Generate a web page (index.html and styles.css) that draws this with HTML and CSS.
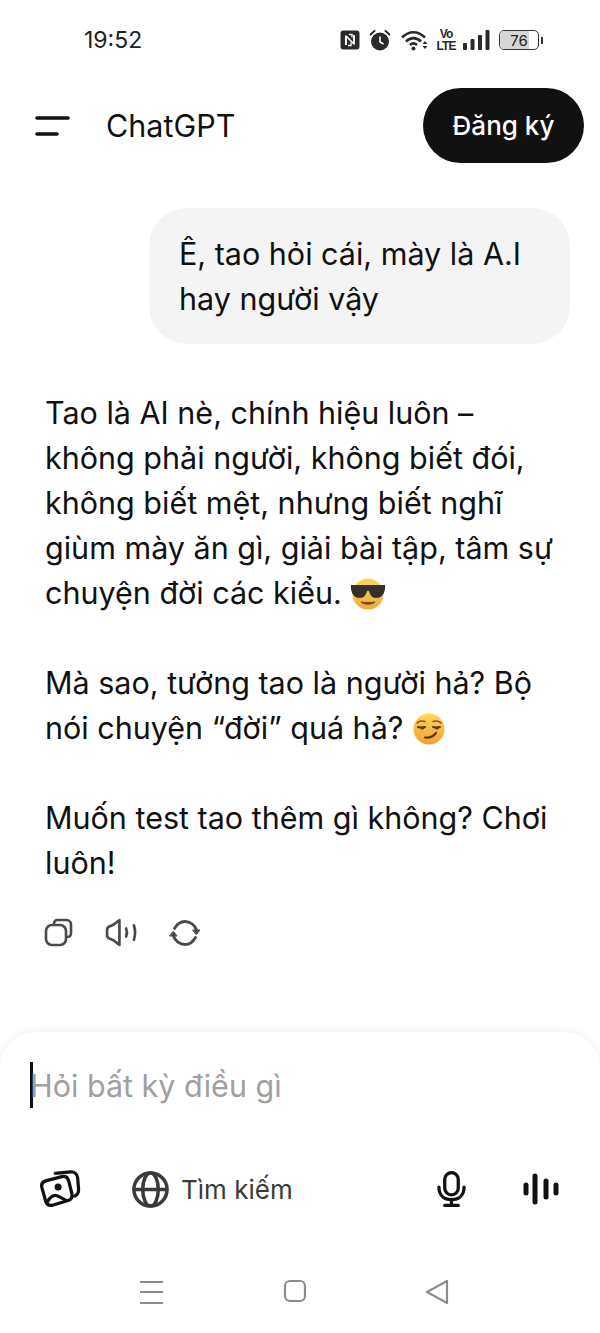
FILE: index.html
```html
<!DOCTYPE html>
<html lang="vi">
<head>
  <meta charset="UTF-8">
  <meta name="viewport" content="width=device-width, initial-scale=1.0">
  <title>ChatGPT</title>
  <link rel="stylesheet" href="styles.css">
</head>
<body>
  <!-- Status bar -->
  <div class="status-bar">
    <span class="clock">19:52</span>
    <div class="status-icons">
      <svg width="20" height="20" viewBox="0 0 20 20"><rect x="0.5" y="0.5" width="19" height="19" rx="3" fill="#2a2a2a"/><path d="M5 15V5.5h1.6L13 12V5h2v9.5h-1.6L7 8v7z" fill="#fff"/><path d="M9 4.5h3v3M8 15.5h3v-3" stroke="#fff" stroke-width="1.3" fill="none"/></svg>
      <svg width="22" height="24" viewBox="0 0 22 24"><circle cx="11" cy="13.5" r="9" fill="#2a2a2a"/><path d="M11 8.5v5.5l3.5 2" stroke="#fff" stroke-width="1.6" fill="none"/><path d="M1.5 6.5l4-3.5M20.5 6.5l-4-3.5" stroke="#2a2a2a" stroke-width="2" stroke-linecap="round"/></svg>
      <svg width="29" height="22" viewBox="0 0 28 22"><path d="M1.5 8.5c7-7 16-7 23 0M5.5 12.5c4.5-4.5 10.5-4.5 15 0M9.5 16c2.2-2 4.8-2 7 0" stroke="#2a2a2a" stroke-width="2.6" fill="none"/><circle cx="13" cy="19.5" r="2" fill="#2a2a2a"/><path d="M22 15h5l-2.5-3zM22 17h5l-2.5 3z" fill="#2a2a2a"/></svg>
      <div class="volte"><span>Vo</span><span>LTE</span></div>
      <svg width="27" height="20" viewBox="0 0 27 20"><rect x="0" y="13" width="4" height="7" rx="1" fill="#2a2a2a"/><rect x="7.5" y="9" width="4" height="11" rx="1" fill="#2a2a2a"/><rect x="15" y="5" width="4" height="15" rx="1" fill="#2a2a2a"/><rect x="22.5" y="0" width="4" height="20" rx="1" fill="#2a2a2a"/></svg>
      <div class="battery"><div class="battery-body"><div class="battery-fill" style="width: 76%"></div><span>76</span></div><div class="battery-cap"></div></div>
    </div>
  </div>

  <!-- Header -->
  <header class="top-bar">
    <svg class="menu-icon" width="36" height="24" viewBox="0 0 36 24"><path d="M2 4h31M2 20h20" stroke="#111" stroke-width="3.6" stroke-linecap="round"/></svg>
    <div class="title">ChatGPT</div>
    <button class="signup">Đăng ký</button>
  </header>

  <!-- Chat -->
  <main class="chat">
    <div class="bubble">Ê, tao hỏi cái, mày là A.I hay người vậy</div>
    <div class="reply">
      <p>Tao là AI nè, chính hiệu luôn – không phải người, không biết đói, không biết mệt, nhưng biết nghĩ giùm mày ăn gì, giải bài tập, tâm sự chuyện đời các kiểu.
        <svg class="emoji" width="36" height="32" viewBox="0 0 36 32"><defs><linearGradient id="face1" x1="0" y1="0" x2="0" y2="1"><stop offset="0" stop-color="#fcd75a"/><stop offset="1" stop-color="#f3a83a"/></linearGradient></defs><circle cx="18" cy="16" r="15.5" fill="url(#face1)"/><path d="M1 7h34v4c-1 6-4 9-9 9-4 0-6-3-7-7h-2c-1 4-3 7-7 7-5 0-8-3-9-9z" fill="#35302b"/><path d="M11 24c4 3 10 3 14 0-4 .8-10 .8-14 0z" fill="#7a4a1e" stroke="#7a4a1e"/></svg></p>
      <p>Mà sao, tưởng tao là người hả? Bộ nói chuyện “đời” quá hả?
        <svg class="emoji" width="34" height="32" viewBox="0 0 34 32"><defs><linearGradient id="face2" x1="0" y1="0" x2="0" y2="1"><stop offset="0" stop-color="#fcd75a"/><stop offset="1" stop-color="#f3a02f"/></linearGradient></defs><circle cx="17" cy="16" r="15.5" fill="url(#face2)"/><path d="M5 10c2-2 5-2.5 8-1.500M21 8.500c3-1 6-.5 8 1.500" stroke="#8a5420" stroke-width="1.5" fill="none" stroke-linecap="round"/><path d="M6 14c2 .6 5 .6 7 0M21 14c2 .6 5 .6 7 0" stroke="#5b3a1c" stroke-width="2" fill="none" stroke-linecap="round"/><ellipse cx="10.5" cy="15" rx="1.8" ry="1.5" fill="#5b3a1c"/><ellipse cx="25" cy="15" rx="1.8" ry="1.5" fill="#5b3a1c"/><path d="M13 24.500c4 .5 8-.5 11-4.500" stroke="#5b3a1c" stroke-width="2.2" fill="none" stroke-linecap="round"/></svg></p>
      <p>Muốn test tao thêm gì không? Chơi luôn!</p>
    </div>
    <div class="actions">
      <svg width="30" height="30" viewBox="0 0 30 30" fill="none" stroke="#4a4a4a" stroke-width="2.6" stroke-linejoin="round"><path d="M10 7V5.500A3.500 3.500 0 0 1 13.500 2h9A4.500 4.500 0 0 1 27 6.500v9a3.500 3.500 0 0 1-3.500 3.500H22"/><rect x="2" y="7" width="20" height="20" rx="6"/></svg>
      <svg width="33" height="31" viewBox="0 0 32 30" fill="none" stroke="#4a4a4a" stroke-width="2.6" stroke-linecap="round" stroke-linejoin="round"><path d="M14 3v24c-2-1-4-4-8-5.500-2-.7-4-1-4-3.500v-6c0-2.500 2-2.800 4-3.500C10 7 12 4 14 3z"/><path d="M20.500 11c1 2.500 1 5.500 0 8M28 8c1.500 4.500 1.500 9.500 0 14"/></svg>
      <svg width="32" height="28" viewBox="0 0 32 28" fill="none" stroke="#4a4a4a" stroke-width="2.8" stroke-linecap="round" stroke-linejoin="round"><path d="M5.500 9.500C8 5 12 2.500 16 2.500c5 0 10 3.500 11.500 8.500"/><path d="M26.500 18.500C24 23 20 25.500 16 25.500c-5 0-10-3.500-11.500-8.500"/><path d="M24 11h7l-3.500 4.500zM1 17h7l-3.500-4.500z" fill="#4a4a4a" stroke-width="1"/></svg>
    </div>
  </main>

  <!-- Composer -->
  <section class="composer">
    <div class="prompt"><span class="caret"></span><span>Hỏi bất kỳ điều gì</span></div>
    <div class="tools">
      <svg class="tool-img" width="42" height="40" viewBox="0 0 44 42" fill="none" stroke="#111" stroke-width="3.4" stroke-linecap="round" stroke-linejoin="round"><path d="M17 4.500l16-1.500c4-.3 7 2 7.500 6l1 12c.3 3.500-1 6-4 7.500"/><path d="M7 12.500l17-4.500c3.500-.9 6 .8 7 4l3.500 14c.9 3.500-.8 6-4 7l-16.500 5c-3.500.9-6-.8-7-4L3 19.500c-.9-3.500.8-6 4-7z"/><path d="M9 34c3-5 7-7 10-6 3 1 7 4 10 5"/><circle cx="20" cy="19" r="2" fill="#111"/></svg>
      <div class="search">
        <svg width="39" height="39" viewBox="0 0 40 40" fill="none" stroke="#3a3a3a" stroke-width="3.6"><circle cx="20" cy="20" r="17"/><ellipse cx="20" cy="20" rx="8" ry="17"/><path d="M3 20h34"/></svg>
        <span>Tìm kiếm</span>
      </div>
      <svg class="tool-mic" width="29" height="38" viewBox="0 0 30 38" fill="none" stroke="#111" stroke-width="3.4" stroke-linecap="round"><rect x="8" y="2" width="14" height="23" rx="7"/><path d="M2 17c0 8 5 13 13 13s13-5 13-13M15 30v6M8 36h14"/></svg>
      <svg class="tool-wave" width="36" height="32" viewBox="0 0 36 32" fill="none" stroke="#111" stroke-linecap="round"><path d="M3 12v8M33 12v8" stroke-width="5"/><path d="M12 3v26" stroke-width="5"/><path d="M23 8v16" stroke-width="5"/></svg>
    </div>
    <!-- Android nav bar -->
    <nav class="nav-bar">
      <svg width="26" height="26" viewBox="0 0 26 26" stroke="#8c8c8c" stroke-width="2.2"><path d="M1 3h23M1 13h23M1 24h23"/></svg>
      <svg width="24" height="24" viewBox="0 0 24 24" fill="none" stroke="#8c8c8c" stroke-width="2.2"><rect x="2" y="2" width="20" height="20" rx="5"/></svg>
      <svg width="24" height="26" viewBox="0 0 24 26" fill="none" stroke="#8c8c8c" stroke-width="2.2" stroke-linejoin="round"><path d="M22 2v22L2 13z"/></svg>
    </nav>
  </section>
</body>
</html>
```

FILE: styles.css
```css
* {
  margin: 0;
  padding: 0;
  box-sizing: border-box;
}

body {
  width: 600px;
  height: 1333px;
  display: flex;
  flex-direction: column;
  background: #fff;
  color: #111;
  font-family: Inter, "Noto Sans", sans-serif;
  overflow: hidden;
}

svg {
  display: block;
  flex-shrink: 0;
}

.status-bar {
  height: 80px;
  display: flex;
  align-items: center;
  justify-content: space-between;
  padding: 0 57px 0 84px;
}

.clock {
  font-size: 23px;
  color: #222;
}

.status-icons {
  display: flex;
  align-items: center;
  gap: 9px;
}

.volte {
  display: flex;
  flex-direction: column;
  width: 16px;
  align-items: center;
  font-family: "Liberation Sans", sans-serif;
  font-size: 12px;
  font-weight: 700;
  line-height: 12px;
  letter-spacing: -1px;
  color: #2a2a2a;
}

.battery {
  display: flex;
  align-items: center;
  gap: 2px;
}

.battery-body {
  width: 40px;
  height: 20px;
  border: 1.5px solid #333;
  border-radius: 5px;
  display: flex;
  align-items: center;
  justify-content: center;
  font-size: 15px;
  color: #222;
  position: relative;
  overflow: hidden;
}

.battery-fill {
  position: absolute;
  left: 0;
  top: 0;
  bottom: 0;
  background: #d6d6d6;
}

.battery-body span {
  position: relative;
}

.battery-cap {
  width: 2px;
  height: 7px;
  background: #333;
}

.top-bar {
  height: 75px;
  margin-top: 8px;
  display: flex;
  align-items: center;
  padding: 0 16px 0 35px;
}

.title {
  margin-left: 35px;
  font-size: 30.5px;
  font-weight: 400;
  flex: 1;
}

.signup {
  width: 161px;
  height: 75px;
  border: none;
  border-radius: 38px;
  background: #111;
  color: #fff;
  font-family: inherit;
  font-size: 26px;
  font-weight: 500;
}

.chat {
  flex: 1;
  display: flex;
  flex-direction: column;
  padding: 45px 30px 0 45px;
}

.bubble {
  align-self: flex-end;
  width: 421px;
  padding: 23px 30px;
  background: #f4f4f4;
  border-radius: 38px;
  font-size: 30.5px;
  line-height: 45px;
}

.reply {
  margin-top: 46px;
  width: 525px;
  font-size: 30.5px;
  line-height: 45px;
}

.reply p {
  margin-bottom: 45px;
}

.reply p:last-child {
  margin-bottom: 0;
}

.emoji {
  display: inline-block;
  vertical-align: -6px;
}

.actions {
  margin: 32px 0 0 -1px;
  display: flex;
  align-items: center;
  gap: 31px;
}

.composer {
  height: 301px;
  border-radius: 36px 36px 0 0;
  box-shadow: 0 -1px 8px rgba(0, 0, 0, 0.07);
  display: flex;
  flex-direction: column;
}

.prompt {
  display: flex;
  align-items: center;
  height: 46px;
  margin: 30px 0 0 30px;
  font-size: 30.5px;
  color: #a0a0a0;
}

.caret {
  width: 3px;
  height: 46px;
  background: #111;
  margin-right: -3px;
}

.tools {
  display: flex;
  align-items: center;
  margin-top: 61px;
  padding: 0 41px 0 39px;
}

.search {
  display: flex;
  align-items: center;
  gap: 11px;
  margin-left: 50px;
  flex: 1;
  font-size: 26px;
  color: #3a3a3a;
}

.tool-mic {
  margin-right: 57px;
}

.nav-bar {
  margin-top: 70px;
  display: flex;
  justify-content: space-between;
  padding: 0 151px 0 139px;
}
```
